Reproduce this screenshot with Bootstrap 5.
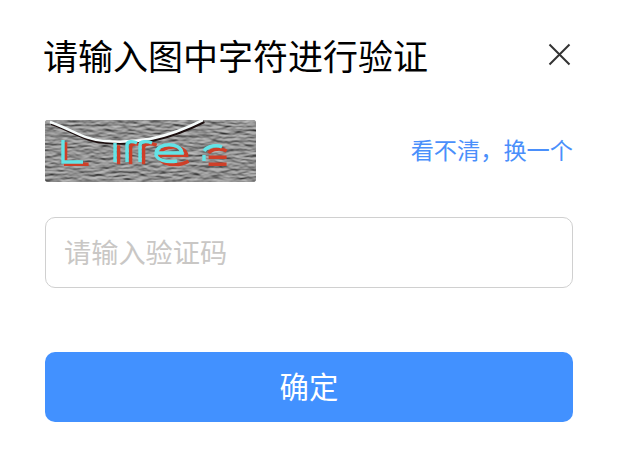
<!DOCTYPE html>
<html lang="zh-CN">
<head>
<meta charset="utf-8">
<title>验证</title>
<link rel="stylesheet" href="https://cdn.jsdelivr.net/npm/bootstrap@5.3.0/dist/css/bootstrap.min.css">
<style>
html,body{background:#fff;height:100%;}
body{font-family:"Liberation Sans","Noto Sans CJK SC",sans-serif;overflow:hidden;}
.dlg-wrap{padding:33px 45px 0 45px;}
.dlg-title{font-size:35px;line-height:50px;color:#000;font-weight:400;margin:0 0 0 -2px;}
.dlg-close{width:23px;height:23px;padding:0;border:0;background:none;margin:0 2px 7px 0;display:block;}
.captcha-row{margin-top:37px;height:62px;}
.captcha-pic{width:211px;height:62px;border-radius:3px;display:block;}
.swap-link{font-size:23.2px;color:#4a8ffb;text-decoration:none;line-height:30px;white-space:nowrap;}
.code-input.form-control{margin-top:35px;height:71px;border:1px solid #d0d0d0;border-radius:10px;font-size:27.2px;padding:2px 19px 0 18px;box-shadow:none;}
.code-input.form-control::placeholder{color:#c9c7c5;opacity:1;}
.ok-btn.btn{margin-top:64px;height:70px;width:100%;background:#4291ff;border:0;border-radius:10px;font-size:29.4px;color:#fff;padding:2px 0 0;}
</style>
</head>
<body>
<div class="dlg-wrap">
  <div class="d-flex justify-content-between align-items-center">
    <h1 class="dlg-title">请输入图中字符进行验证</h1>
    <button class="dlg-close" type="button" aria-label="关闭">
      <svg width="23" height="23" viewBox="0 0 23 23" class="d-block"><path d="M1.5 1.5 21.5 21.5M21.5 1.5 1.5 21.5" stroke="#333" stroke-width="2" fill="none"/></svg>
    </button>
  </div>
  <div class="captcha-row d-flex justify-content-between align-items-center">
    <svg class="captcha-pic" viewBox="0 0 211 62" role="img" aria-label="验证码">
      <defs>
        <filter id="emboss" x="0" y="0" width="100%" height="100%" color-interpolation-filters="sRGB">
          <feTurbulence type="fractalNoise" baseFrequency="0.09 0.36" numOctaves="3" seed="11" result="t"/>
          <feDiffuseLighting in="t" surfaceScale="1.15" diffuseConstant="0.76" lighting-color="#fff">
            <feDistantLight azimuth="90" elevation="48"/>
          </feDiffuseLighting>
          <feGaussianBlur stdDeviation="0.4"/>
        </filter>
      </defs>
      <rect width="211" height="62" fill="#8e8e8e"/>
      <rect width="211" height="62" filter="url(#emboss)"/>
      <path d="M5 2C28 10 40 20 60 21C92 24 122 18 158 0" stroke="#1c0f0f" stroke-width="3" fill="none" transform="translate(1.2 1.6)"/>
      <path d="M5 2C28 10 40 20 60 21C92 24 122 18 158 0" stroke="#f6fbfb" stroke-width="2.6" fill="none"/>
      <g fill="none" stroke-width="3.4">
        <g stroke="#cf3f28" transform="translate(2.6 2.2)">
          <path d="M18 20V42H41"/>
          <path d="M71 42V23M83 42V25C83 21 90 21 94 23M96 42V25C96 21 104 21 109 23"/>
          <path d="M112 33H139C138 22 113 22 112 33C111 43 130 45 141 39"/>
          <path d="M161 31C164 26 175 26 179 29M161 35H179M161 42H179"/>
        </g>
        <g stroke="#63e3e6">
          <path d="M18 20V42H38"/>
          <path d="M70 42V23M82 42V25C82 21 88 21 92 23M95 42V25C95 21 102 21 107 23"/>
          <path d="M111 33H137C136 22 112 22 111 33C110 40 122 43 132 41"/>
          <path d="M159 31C163 25 173 25 177 27M159 35V41"/>
        </g>
      </g>
    </svg>
    <a class="swap-link" href="#">看不清，换一个</a>
  </div>
  <input class="code-input form-control" type="text" placeholder="请输入验证码">
  <button class="ok-btn btn" type="button">确定</button>
</div>
</body>
</html>
